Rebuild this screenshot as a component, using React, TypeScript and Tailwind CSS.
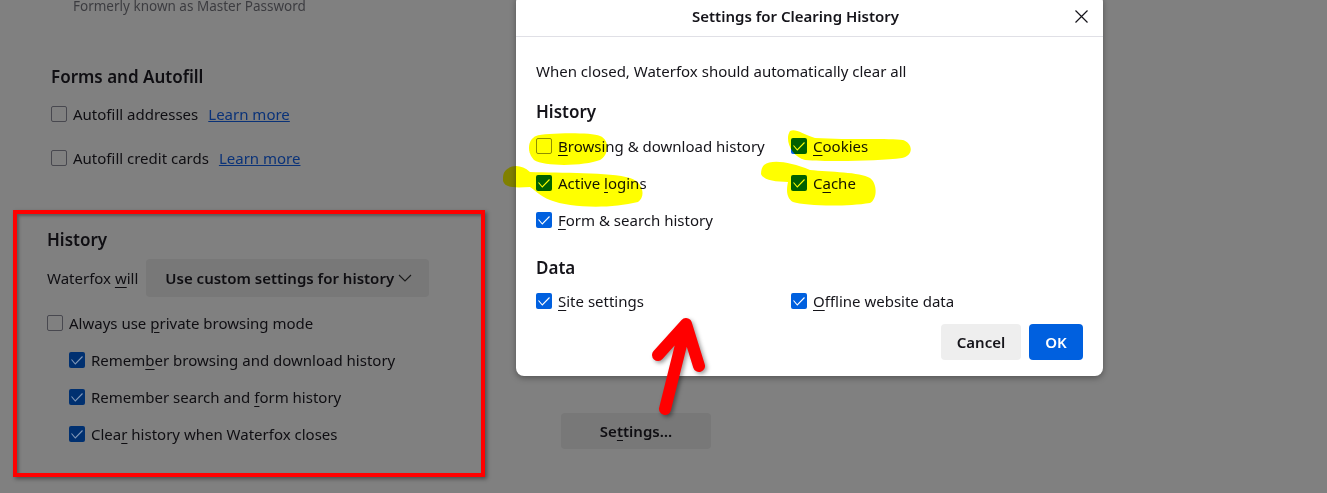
import React from "react";

function Box({ checked, dim }: { checked?: boolean; dim?: boolean }) {
  if (!checked) {
    return (
      <span
        className={`block w-4 h-4 shrink-0 rounded-[2px] border ${dim ? "border-[#48484f]" : "border-[#8f8f9d] bg-white"}`}
      />
    );
  }
  return (
    <span className={`flex items-center justify-center w-4 h-4 shrink-0 rounded-[2px] ${dim ? "bg-[#003070]" : "bg-[#0060df]"}`}>
      <svg width="14" height="14" viewBox="0 0 14 14" fill="none">
        <path d="M1.5 6.5 L5.3 11 L12.5 3.5" stroke={dim ? "#8098b8" : "#ffffff"} strokeWidth="1.1" />
      </svg>
    </span>
  );
}

function Row({ checked, dim, children, className = "" }: { checked?: boolean; dim?: boolean; children: React.ReactNode; className?: string }) {
  return (
    <div className={`flex items-center gap-[6px] h-[22px] whitespace-nowrap ${className}`}>
      <Box checked={checked} dim={dim} />
      <span>{children}</span>
    </div>
  );
}

const U = ({ children }: { children: React.ReactNode }) => <u className="underline underline-offset-[3px]">{children}</u>;

export default function App() {
  return (
    <div className="relative w-[1327px] h-[493px] overflow-hidden bg-[#808080] text-[15px] leading-[22px] text-[#0f0e12] font-['Noto_Sans',sans-serif]">
      {/* dimmed preferences page */}
      <div className="flex flex-col">
        <p className="pl-[73px] h-[12px] leading-[12px] text-[#3c3c40] text-[13.5px]">Formerly known as Master Password</p>
        <section className="pl-[51px] pt-[52px]">
          <h2 className="text-[17px] leading-[26px] font-semibold">Forms and Autofill</h2>
          <Row dim className="mt-[13px]">
            Autofill addresses
            <a className="ml-[10px] text-[#0a3278] underline">Learn more</a>
          </Row>
          <Row dim className="mt-[22px]">
            Autofill credit cards
            <a className="ml-[10px] text-[#0a3278] underline">Learn more</a>
          </Row>
        </section>
        <div className="flex items-start mt-[41px]">
          <section className="ml-[13px] w-[472px] h-[267px] border-[4px] border-[#ff0000] shadow-[2px_2px_4px_rgba(0,0,0,0.4),inset_2px_2px_3px_rgba(0,0,0,0.3)] pl-[30px] pt-[13px]">
            <h2 className="text-[17px] leading-[26px] font-semibold">History</h2>
            <div className="flex items-center mt-[6px]">
              <span>
                Waterfox <U>w</U>ill
              </span>
              <div className="ml-[8px] flex items-center w-[283px] h-[38px] pl-[19px] rounded-[4px] bg-[#787878] font-semibold">
                Use custom settings for history
                <svg className="ml-[4px]" width="14" height="14" viewBox="0 0 14 14" fill="none">
                  <path d="M1 4 L7 10 L13 4" stroke="#1a1a1a" strokeWidth="1.1" />
                </svg>
              </div>
            </div>
            <Row dim className="mt-[15px]">
              Always use <U>p</U>rivate browsing mode
            </Row>
            <div className="pl-[22px] flex flex-col gap-[15px] mt-[15px]">
              <Row dim checked>
                Remem<U>b</U>er browsing and download history
              </Row>
              <Row dim checked>
                Remember search and <U>f</U>orm history
              </Row>
              <Row dim checked>
                Clea<U>r</U> history when Waterfox closes
              </Row>
            </div>
          </section>
          <div className="ml-[76px] mt-[203px] w-[150px] h-[36px] flex items-center justify-center rounded-[4px] bg-[#787878] font-semibold">
            <span>
              Se<U>t</U>tings…
            </span>
          </div>
        </div>
      </div>

      {/* dialog */}
      <div className="absolute left-[516px] top-[-6px] w-[587px] h-[382px] rounded-[8px] bg-white text-[#15141a] shadow-[0_2px_6px_rgba(0,0,0,0.35)] flex flex-col">
        <header className="relative h-[43px] shrink-0 border-b border-[#e0e0e6] pt-[2px] pr-[28px] flex items-center justify-center font-semibold">
          Settings for Clearing History
          <svg className="absolute right-[15px] top-[16px]" width="13" height="13" viewBox="0 0 13 13" fill="none">
            <path d="M0.5 0.5 L12.5 12.5 M12.5 0.5 L0.5 12.5" stroke="#15141a" strokeWidth="1.2" />
          </svg>
        </header>
        <div className="flex flex-col flex-1 px-[20px] pt-[23px]">
          <p>When closed, Waterfox should automatically clear all</p>
          <h3 className="mt-[17px] text-[17px] leading-[26px] font-semibold">History</h3>
          <div className="mt-[10px] grid grid-cols-[255px_1fr] gap-y-[15px]">
            <Row>
              <U>B</U>rowsing &amp; download history
            </Row>
            <Row checked>
              <U>C</U>ookies
            </Row>
            <Row checked>
              Active <U>l</U>ogins
            </Row>
            <Row checked>
              C<U>a</U>che
            </Row>
            <Row checked>
              <U>F</U>orm &amp; search history
            </Row>
          </div>
          <h3 className="mt-[24px] text-[17px] leading-[26px] font-semibold">Data</h3>
          <div className="mt-[9px] grid grid-cols-[255px_1fr]">
            <Row checked>
              <U>S</U>ite settings
            </Row>
            <Row checked>
              <U>O</U>ffline website data
            </Row>
          </div>
          <div className="mt-[12px] flex justify-end gap-[8px] font-semibold">
            <button className="w-[80px] h-[36px] rounded-[4px] bg-[#eeeeee]">Cancel</button>
            <button className="w-[54px] h-[36px] rounded-[4px] bg-[#0060df] text-white">OK</button>
          </div>
        </div>
      </div>

      {/* highlighter and arrow annotations */}
      <svg className="absolute inset-0 mix-blend-multiply pointer-events-none" width="1327" height="493" fill="#ffff00">
        <path d="M536 136 C545 133 590 132 600 136 C610 140 609 155 600 160 C585 166 545 167 534 160 C527 153 527 140 536 136 Z" />
        <path d="M790 131 C795 128 803 134 815 138 C850 140 890 138 903 140 C914 144 913 156 902 158 C880 161 830 162 805 160 C792 157 784 140 790 131 Z" />
        <path d="M506 170 C513 164 522 165 530 172 C560 173 610 172 630 178 C645 183 645 198 638 202 C610 209 570 208 550 200 C540 196 535 190 530 187 C515 188 505 188 503 181 C503 176 503 173 506 170 Z" />
        <path d="M764 165 C772 159 790 162 810 170 C830 172 860 172 870 178 C878 184 877 200 870 203 C845 207 805 206 793 202 C785 197 787 187 788 182 C775 182 763 180 761 174 C761 170 762 167 764 165 Z" />
      </svg>
      <svg className="absolute inset-0 pointer-events-none drop-shadow-[2px_2px_2px_rgba(0,0,0,0.4)]" width="1327" height="493" fill="none">
        <path d="M665 409 L686 325 M658 355 L686 324 L699 366" stroke="#ff0000" strokeWidth="12" strokeLinecap="round" strokeLinejoin="round" />
      </svg>
    </div>
  );
}
